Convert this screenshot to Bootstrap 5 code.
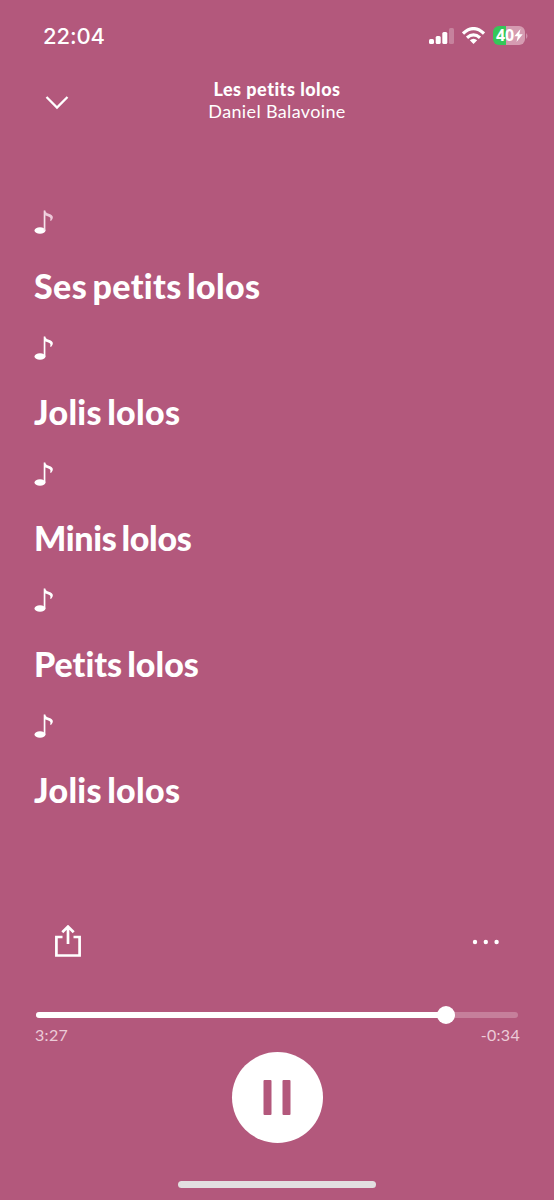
<!DOCTYPE html>
<html lang="fr">
<head>
<meta charset="utf-8">
<meta name="viewport" content="width=device-width, initial-scale=1">
<title>Les petits lolos</title>
<link href="https://cdn.jsdelivr.net/npm/bootstrap@5.3.0/dist/css/bootstrap.min.css" rel="stylesheet">
<style>
  :root { --rose: #b3587c; }
  body { background: var(--rose); color: #fff; font-family: Lato, sans-serif; font-variant-ligatures: none; height: 1200px; overflow: hidden; }
  svg { display: block; flex-shrink: 0; }
  .status { height: 71px; padding: 0 26px 0 43px; }
  .clock { font: 500 22px/26px Inter, sans-serif; letter-spacing: -.1px; }
  .battery { width: 32px; height: 19px; border-radius: 6px; background: linear-gradient(90deg, #34c759 13px, #d59bb1 13px); font: 700 16px/19px "Open Sans", sans-serif; letter-spacing: -.2px; }
  .titlebar { height: 57px; padding: 0 45px; }
  .side { width: 24px; }
  .song { font-size: 18px; line-height: 22px; font-weight: 900; letter-spacing: .5px; padding-top: 1px; }
  .artist { font-size: 18px; line-height: 23px; letter-spacing: .35px; }
  .lyrics { margin-top: 63px; padding-left: 34px; }
  .lyrics p { height: 63px; line-height: 63px; font-size: 34px; font-weight: 900; white-space: nowrap; word-spacing: -3px; }
  .lyrics .wide { letter-spacing: .3px; }
  .lyrics .wider { letter-spacing: .36px; }
  .lyrics .tight { letter-spacing: -.3px; }
  .tune { height: 63px; padding-top: 19px; }
  .actions { height: 60px; margin-top: 91px; padding: 0 54px; }
  .timeline { height: 18px; margin: 33.500px 36px 0; }
  .rail { height: 6px; border-radius: 3px; background: #c67f9b; }
  .rail .progress-bar { height: 6px; border-radius: 3px; background: #fff; }
  .knob { width: 18px; height: 18px; top: 0; margin-left: -9px; }
  .times { padding: 0 34px 0 35px; margin-top: 1.500px; font-size: 16px; line-height: 20px; color: #eccbd8; letter-spacing: .3px; }
  .pause { width: 91px; height: 91px; margin-top: 7px; }
  .home { width: 198px; height: 7px; margin-top: 38px; background: #e2dfe0; }
</style>
</head>
<body>
<svg width="0" height="0" class="position-absolute" aria-hidden="true">
  <symbol id="note" viewBox="0 0 20 24"><ellipse cx="6" cy="20.500" rx="5.500" ry="3.200"/><path d="M9.700.5h1.700v20H9.700Z"/><path d="M10.500.5Q12 3 15.500 4.100C19.300 5.300 20 8 17 11L16 10.300C17.600 7.800 15.500 6.400 10.500 5.200Z"/></symbol>
</svg>
<div class="status d-flex justify-content-between align-items-center">
  <span class="clock">22:04</span>
  <div class="d-flex align-items-center">
    <svg width="25" height="18" viewBox="0 0 25 18" fill="#fff"><rect y="12" width="5" height="5" rx="1.500"/><rect x="6.700" y="9" width="5" height="8" rx="1.500"/><rect x="13.300" y="5" width="5" height="12" rx="1.500"/><rect x="20" y="1" width="5" height="16" rx="1.500" opacity=".25"/></svg>
    <svg class="ms-2" width="23" height="18" viewBox="0 0 23 18" fill="none" stroke="#fff" stroke-width="3.200"><path d="M1 6.500Q11.500-3.300 22 6.500M5 10.700Q11.500 4.900 18 10.700"/><path d="M7.800 13.300Q11.500 10.300 15.200 13.300L11.500 17Z" fill="#fff" stroke="none"/></svg>
    <div class="battery d-flex align-items-center ms-2"><span style="padding-left:3px">40</span>
      <svg width="9" height="13" viewBox="0 0 9 13" fill="#fff"><path d="M6.500 0 .3 7.300h3.500L2.500 13 8.700 5.300H5.200Z"/></svg></div>
    <svg width="3" height="6" viewBox="0 0 3 6"><path d="M1 0q3 3 0 6Z" fill="#d08fab"/></svg>
  </div>
</div>
<header class="titlebar d-flex justify-content-between align-items-center">
  <svg class="side mt-1" width="24" height="16" viewBox="0 0 24 16" fill="none" stroke="#fff" stroke-width="2.300"><path d="m1.500 3 10.500 10.500L22.500 3"/></svg>
  <div class="text-center"><div class="song">Les petits lolos</div><div class="artist">Daniel Balavoine</div></div>
  <span class="side"></span>
</header>
<main class="lyrics">
  <div class="tune"><svg role="img" aria-label="♪" width="20" height="24" viewBox="0 0 20 24" fill="#fff"><ellipse cx="6" cy="20.500" rx="5.500" ry="3.200"/><path d="M9.700.5h1.700v20H9.700Z" fill="#f6e3eb"/><path d="M10.500.5Q12 3 15.500 4.100C19.300 5.300 20 8 17 11L16 10.300C17.600 7.800 15.500 6.400 10.500 5.200Z" fill="#edc9d9"/></svg></div>
  <p class="m-0 wider">Ses petits lolos</p>
  <div class="tune"><svg role="img" aria-label="♪" width="20" height="24" fill="#fff"><use href="#note"/></svg></div>
  <p class="m-0 wide">Jolis lolos</p>
  <div class="tune"><svg role="img" aria-label="♪" width="20" height="24" fill="#fff"><use href="#note"/></svg></div>
  <p class="m-0 tight">Minis lolos</p>
  <div class="tune"><svg role="img" aria-label="♪" width="20" height="24" fill="#fff"><use href="#note"/></svg></div>
  <p class="m-0">Petits lolos</p>
  <div class="tune"><svg role="img" aria-label="♪" width="20" height="24" fill="#fff"><use href="#note"/></svg></div>
  <p class="m-0 wide">Jolis lolos</p>
</main>
<div class="actions d-flex justify-content-between align-items-center">
  <svg width="28" height="34" viewBox="0 0 28 34" fill="none" stroke="#fff" stroke-width="2.700"><path d="M8.500 12H2.400v18.500h23.200V12h-6.100M14 19V2M8.300 7.300 14 1.600l5.700 5.700"/></svg>
  <svg width="28" height="6" viewBox="0 0 28 6" fill="#fff"><circle cx="3" cy="3" r="2.200"/><circle cx="13.800" cy="3" r="2.200"/><circle cx="24.600" cy="3" r="2.200"/></svg>
</div>
<div class="timeline position-relative d-flex align-items-center">
  <div class="rail w-100"><div class="progress-bar" style="width:85%"></div></div>
  <span class="knob position-absolute rounded-circle bg-white" style="left:85%"></span>
</div>
<div class="times d-flex justify-content-between"><span>3:27</span><span>-0:34</span></div>
<div class="pause mx-auto rounded-circle bg-white d-flex align-items-center justify-content-center">
  <svg width="28" height="35" viewBox="0 0 28 35" fill="#b3587c"><rect x=".5" width="8" height="35" rx="1"/><rect x="19.500" width="8" height="35" rx="1"/></svg>
</div>
<div class="home mx-auto rounded-pill"></div>
<script src="https://cdn.jsdelivr.net/npm/bootstrap@5.3.0/dist/js/bootstrap.bundle.min.js"></script>
</body>
</html>
